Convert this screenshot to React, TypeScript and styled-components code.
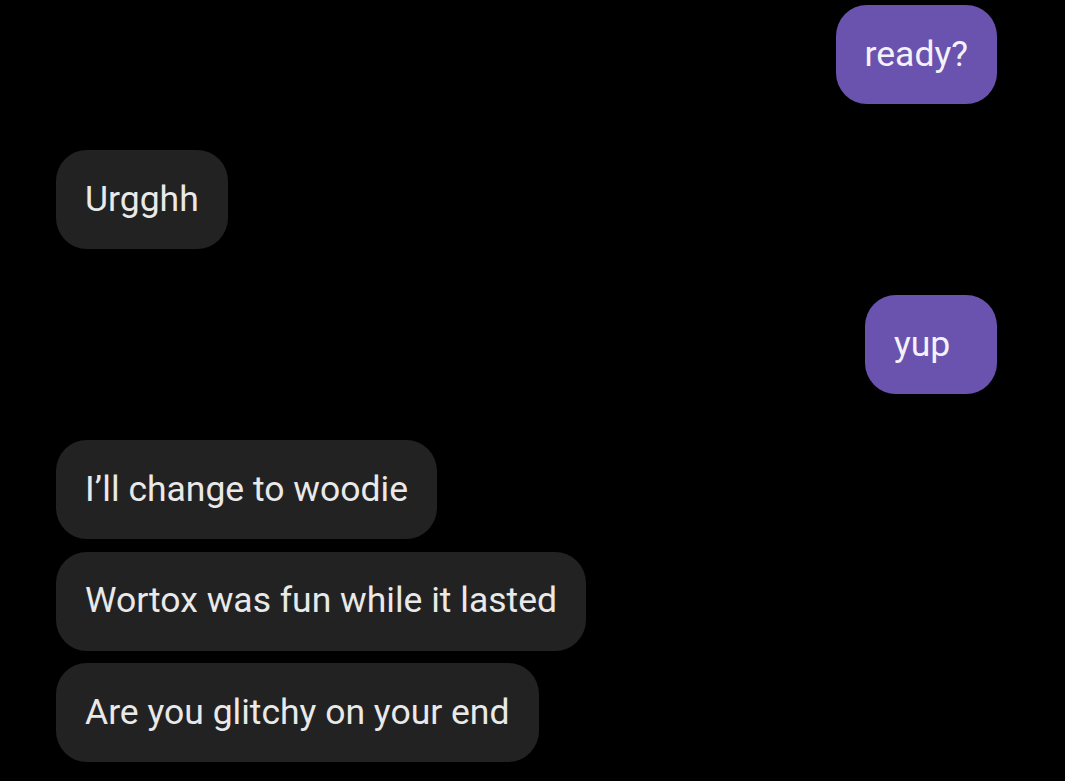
import React from "react";
import styled, { createGlobalStyle } from "styled-components";

const Global = createGlobalStyle`
  html, body { margin: 0; padding: 0; background: #000; }
  body { font-family: Roboto, "Noto Sans", sans-serif; }
`;

const Thread = styled.div`
  display: flex;
  flex-direction: column;
  padding: 5px 68px 0 56px;
  width: 1065px;
  height: 781px;
  box-sizing: border-box;
  background: #000;
  overflow: hidden;
`;

const Group = styled.div<{ $mine?: boolean }>`
  display: flex;
  flex-direction: column;
  align-items: ${(p) => (p.$mine ? "flex-end" : "flex-start")};
  gap: 12.5px;
  margin-bottom: 46px;
`;

const Bubble = styled.div<{ $mine?: boolean }>`
  box-sizing: border-box;
  height: 99px;
  min-width: 132px;
  display: flex;
  align-items: center;
  padding: 0 29px 2px;
  border-radius: 31px;
  font-size: 35.5px;
  background: ${(p) => (p.$mine ? "#6a53ae" : "#222222")};
  color: ${(p) => (p.$mine ? "#f4f2f8" : "#e9e9e9")};
  white-space: nowrap;
`;

const messages: { mine: boolean; texts: string[] }[] = [
  { mine: true, texts: ["ready?"] },
  { mine: false, texts: ["Urgghh"] },
  { mine: true, texts: ["yup"] },
  {
    mine: false,
    texts: ["I’ll change to woodie", "Wortox was fun while it lasted", "Are you glitchy on your end"],
  },
];

export default function App() {
  return (
    <>
      <Global />
      <Thread>
        {messages.map((g, i) => (
          <Group key={i} $mine={g.mine}>
            {g.texts.map((t) => (
              <Bubble key={t} $mine={g.mine}>
                {t}
              </Bubble>
            ))}
          </Group>
        ))}
      </Thread>
    </>
  );
}
